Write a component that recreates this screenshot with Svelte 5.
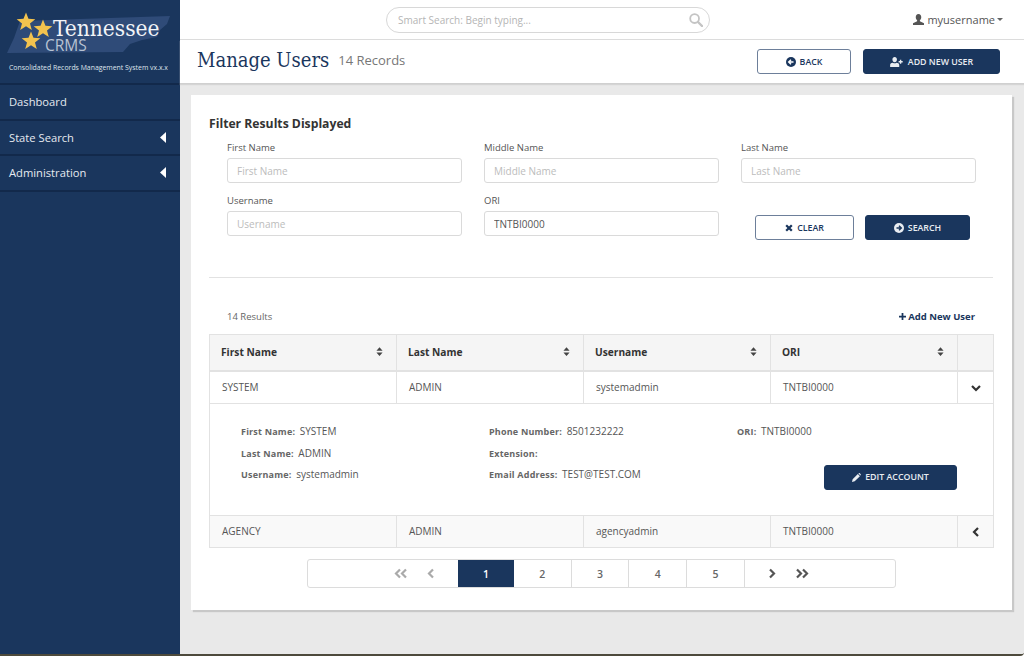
<script>
  const filters = [
    { label: 'First Name', placeholder: 'First Name', value: '' },
    { label: 'Middle Name', placeholder: 'Middle Name', value: '' },
    { label: 'Last Name', placeholder: 'Last Name', value: '' },
    { label: 'Username', placeholder: 'Username', value: '' },
    { label: 'ORI', placeholder: 'ORI', value: 'TNTBI0000' }
  ];

  const columns = ['First Name', 'Last Name', 'Username', 'ORI'];
  const pages = [1, 2, 3, 4, 5];
  const nav = [
    { label: 'Dashboard', arrow: false },
    { label: 'State Search', arrow: true },
    { label: 'Administration', arrow: true }
  ];
  const star = 'M0 -10 L2.6 -3.3 L9.8 -3 L4.2 1.5 L6.1 8.4 L0 4.5 L-6.1 8.4 L-4.2 1.5 L-9.8 -3 L-2.6 -3.3 Z';
</script>

{#snippet circleArrow(dir)}
  <svg class="ico" viewBox="0 0 12 12" width="10" height="10">
    <circle cx="6" cy="6" r="6" fill="currentColor" />
    {#if dir === 'left'}
      <path d="M9 6H3.6M6 3.2L3.2 6L6 8.8" class="cut" />
    {:else}
      <path d="M3 6H8.4M6 3.2L8.8 6L6 8.8" class="cut dark" />
    {/if}
  </svg>
{/snippet}

{#snippet sortIcon()}
  <svg class="sort" viewBox="0 0 8 10" width="7" height="9">
    <path d="M4 0L7.5 4H.5ZM4 10L.5 6H7.5Z" fill="#444" />
  </svg>
{/snippet}

{#snippet chevron(points, stroke, width = 10, height = 10)}
  <svg viewBox="0 0 {width} {height}" {width} {height}>
    <path d={points} fill="none" stroke={stroke} stroke-width="2.2" />
  </svg>
{/snippet}

<div class="shell">
  <aside class="sidebar">
    <div class="brand">
      <svg class="logo" viewBox="0 0 180 60" width="180" height="60">
        <path d="M20 21L50 20L170 16L167 24L160 30L157 37L142 40L130 44L123 52L7 53L14 38Z" fill="#2f4b78" />
        <path d="{star}" transform="translate(26 22) scale(.95)" fill="#f3c34e" />
        <path d="{star}" transform="translate(43 29) scale(.95)" fill="#f3c34e" />
        <path d="{star}" transform="translate(31 41) scale(.95)" fill="#f3c34e" />
        <text x="53" y="36" class="logo-name">Tennessee</text>
        <text x="45" y="51" class="logo-crms">CRMS</text>
      </svg>
      <div class="tagline">Consolidated Records Management System vx.x.x</div>
    </div>
    <nav>
      {#each nav as item}
        <div class="nav-item">
          <span>{item.label}</span>
          {#if item.arrow}
            <svg viewBox="0 0 6 11" width="6" height="11"><path d="M6 0V11L0 5.500Z" fill="#fff" /></svg>
          {/if}
        </div>
      {/each}
    </nav>
  </aside>

  <div class="main">
    <header class="topbar">
      <div class="smart-search">
        <span>Smart Search: Begin typing...</span>
        <svg viewBox="0 0 14 14" width="14" height="14">
          <circle cx="5.600" cy="5.600" r="4.400" fill="none" stroke="#c4c4c4" stroke-width="1.800" />
          <path d="M9 9L13 13" stroke="#c4c4c4" stroke-width="2.400" stroke-linecap="round" />
        </svg>
      </div>
      <div class="account">
        <svg viewBox="0 0 12 12" width="11" height="11">
          <path d="M6 0C8 0 9 1.500 9 3.500C9 5 8.300 6.200 7.500 6.800V7.800L12 10V12H0V10L4.500 7.800V6.800C3.700 6.200 3 5 3 3.500C3 1.500 4 0 6 0Z" fill="#555" />
        </svg>
        <span>myusername</span>
        <i class="caret"></i>
      </div>
    </header>

    <div class="titlebar">
      <div class="title">
        <h1>Manage Users</h1>
        <span class="count">14 Records</span>
      </div>
      <div class="actions">
        <button class="btn outline back">
          {@render circleArrow('left')}
          BACK
        </button>
        <button class="btn solid add">
          <svg class="ico" viewBox="0 0 14 11" width="13" height="10">
            <path d="M5 0C6.500 0 7.500 1.100 7.500 2.700C7.500 4.300 6.500 5.800 5 5.800C3.500 5.800 2.500 4.300 2.500 2.700C2.500 1.100 3.500 0 5 0ZM0 11V8.500C0 7 1.500 6.300 3 6.200C4.200 7 5.800 7 7 6.200C8.500 6.300 10 7 10 8.500V11Z" fill="currentColor" />
            <path d="M11.500 3V7.500M9.300 5.200H13.800" stroke="currentColor" stroke-width="1.500" />
          </svg>
          ADD NEW USER
        </button>
      </div>
    </div>

    <div class="content">
      <section class="card">
        <h2>Filter Results Displayed</h2>
        <form class="filters">
          {#each filters as f}
            <label>
              <span>{f.label}</span>
              <input type="text" placeholder={f.placeholder} value={f.value} />
            </label>
          {/each}
          <div class="filter-actions">
            <button type="button" class="btn outline clear">
              <svg class="ico" viewBox="0 0 10 10" width="8" height="8">
                <path d="M1.500 1.500L8.500 8.500M8.500 1.500L1.500 8.500" stroke="currentColor" stroke-width="2.800" />
              </svg>
              CLEAR
            </button>
            <button type="button" class="btn solid search">
              {@render circleArrow('right')}
              SEARCH
            </button>
          </div>
        </form>

        <hr />

        <div class="results-bar">
          <span>14 Results</span>
          <a href="#add">
            <svg viewBox="0 0 8 8" width="7" height="7"><path d="M4 0V8M0 4H8" stroke="currentColor" stroke-width="2" /></svg>
            Add New User
          </a>
        </div>

        <table>
          <thead>
            <tr>
              {#each columns as c}
                <th><div class="th-inner">{c}{@render sortIcon()}</div></th>
              {/each}
              <th class="toggle"></th>
            </tr>
          </thead>
          <tbody>
            <tr class="row">
              <td>SYSTEM</td>
              <td>ADMIN</td>
              <td>systemadmin</td>
              <td>TNTBI0000</td>
              <td class="toggle">{@render chevron('M1 3L5 7L9 3', '#333')}</td>
            </tr>
            <tr class="detail-row">
              <td colspan="5">
                <div class="details">
                  <div class="detail-col one">
                    <p><b>First Name:</b> SYSTEM</p>
                    <p><b>Last Name:</b> ADMIN</p>
                    <p><b>Username:</b> systemadmin</p>
                  </div>
                  <div class="detail-col two">
                    <p><b>Phone Number:</b> 8501232222</p>
                    <p><b>Extension:</b></p>
                    <p><b>Email Address:</b> TEST@TEST.COM</p>
                  </div>
                  <div class="detail-col three">
                    <p><b>ORI:</b> TNTBI0000</p>
                    <button class="btn solid edit">
                      <svg class="ico" viewBox="0 0 10 10" width="9" height="9">
                        <path d="M0 10L.7 7L6.500 1.200L8.800 3.500L3 9.300ZM7.300 .5C7.800 0 8.400 0 8.900 .5L9.500 1.100C10 1.600 10 2.200 9.500 2.700L9.400 2.900L7.100 .6Z" fill="currentColor" />
                      </svg>
                      EDIT ACCOUNT
                    </button>
                  </div>
                </div>
              </td>
            </tr>
            <tr class="row alt">
              <td>AGENCY</td>
              <td>ADMIN</td>
              <td>agencyadmin</td>
              <td>TNTBI0000</td>
              <td class="toggle">{@render chevron('M7 1L3 5L7 9', '#333')}</td>
            </tr>
          </tbody>
        </table>

        <div class="pager">
          <div class="pager-left">
            {@render chevron('M6 1.500L2 5.500L6 9.500M12 1.500L8 5.500L12 9.500', '#aaa', 14, 11)}
            {@render chevron('M6 1.500L2 5.500L6 9.500', '#aaa', 8, 11)}
          </div>
          {#each pages as p}
            <div class="page" class:active={p === 1}>{p}</div>
          {/each}
          <div class="pager-right">
            {@render chevron('M2 1.500L6 5.500L2 9.500', '#555', 8, 11)}
            {@render chevron('M2 1.500L6 5.500L2 9.500M8 1.500L12 5.500L8 9.500', '#555', 14, 11)}
          </div>
        </div>
      </section>
    </div>
  </div>
</div>

<style>
  :global(body) {
    margin: 0;
    font-family: "Open Sans", "Liberation Sans", sans-serif;
    color: #555;
  }

  .shell {
    display: flex;
    width: 1024px;
    height: 656px;
    overflow: hidden;
    border-bottom: 2px solid #4d4a3c;
    border-bottom-right-radius: 4px;
    box-sizing: border-box;
  }

  .sidebar {
    width: 180px;
    flex: none;
    background: #1a365d;
    color: #fff;
  }

  .brand {
    height: 85px;
    box-sizing: border-box;
    border-bottom: 2px solid #12294b;
  }

  .logo {
    display: block;
  }

  .logo-name {
    font-family: "DejaVu Serif Condensed", "DejaVu Serif", serif;
    font-size: 22.500px;
    fill: #f2f4f7;
  }

  .logo-crms {
    font-family: "Open Sans", sans-serif;
    font-size: 15.500px;
    fill: #b9c3d3;
  }

  .tagline {
    margin: 2px 0 0 9px;
    font-size: 6.900px;
    line-height: 12px;
    white-space: nowrap;
    color: #dfe4ec;
  }

  .nav-item {
    height: 35.500px;
    box-sizing: border-box;
    display: flex;
    align-items: center;
    justify-content: space-between;
    padding: 0 14px 0 9px;
    font-size: 11.200px;
    color: #e6eaf0;
    border-bottom: 2px solid #12294b;
  }

  .main {
    flex: 1;
    min-width: 0;
    display: flex;
    flex-direction: column;
    background: #e9e9e9;
  }

  .topbar {
    height: 40px;
    box-sizing: border-box;
    flex: none;
    background: #fff;
    border-bottom: 1px solid #dcdcdc;
    position: relative;
    display: flex;
    justify-content: flex-end;
    align-items: center;
    padding-right: 21px;
  }

  .smart-search {
    position: absolute;
    left: 206px;
    top: 7px;
    width: 324px;
    height: 26px;
    box-sizing: border-box;
    border: 1px solid #d8d8d8;
    border-radius: 13px;
    display: flex;
    align-items: center;
    justify-content: space-between;
    padding: 0 6px 0 11px;
    font-size: 10px;
    color: #b5b5b5;
  }

  .account {
    display: flex;
    align-items: center;
    gap: 3px;
    font-size: 11px;
    color: #555;
  }

  .caret {
    width: 0;
    height: 0;
    border-left: 3px solid transparent;
    border-right: 3px solid transparent;
    border-top: 3px solid #666;
    margin-left: -1px;
  }

  .titlebar {
    height: 44px;
    box-sizing: border-box;
    flex: none;
    background: #fff;
    border-bottom: 1px solid #d0d0d0;
    box-shadow: 0 1px 1px #d5d5d5;
    display: flex;
    align-items: center;
    justify-content: space-between;
    padding: 0 24px 0 17px;
  }

  .title {
    display: flex;
    align-items: center;
    gap: 9px;
    margin-top: -3px;
  }

  h1 {
    margin: 0;
    font-family: "DejaVu Serif Condensed", "DejaVu Serif", serif;
    font-weight: 400;
    font-size: 20px;
    color: #1a365d;
  }

  .count {
    font-size: 13px;
    color: #777;
  }

  .actions {
    display: flex;
    gap: 12px;
  }

  .btn {
    height: 25px;
    box-sizing: border-box;
    border-radius: 3px;
    font-family: inherit;
    font-size: 8.800px;
    font-weight: 600;
    display: inline-flex;
    align-items: center;
    justify-content: center;
    gap: 4px;
    padding: 0;
    cursor: pointer;
  }

  .solid {
    background: #1a365d;
    border: 1px solid #1a365d;
    color: #e9edf2;
  }

  .outline {
    background: #fff;
    border: 1px solid #6d7f9a;
    color: #1a365d;
  }

  .ico {
    flex: none;
  }

  .cut {
    fill: none;
    stroke: #fff;
    stroke-width: 1.700;
  }

  .cut.dark {
    stroke: #1a365d;
  }

  .back { width: 94px; }
  .add { width: 137px; gap: 5px; }
  .clear { width: 99px; }
  .search { width: 105px; }
  .edit { width: 133px; font-weight: 600; }

  .content {
    padding: 11px 11px 0 11px;
  }

  .card {
    background: #fff;
    width: 821px;
    height: 515px;
    box-sizing: border-box;
    box-shadow: 2px 2px 1px #c8c8c8;
    padding: 21px 18px 0 18px;
  }

  h2 {
    margin: 0;
    font-size: 12.200px;
    line-height: 16px;
    font-weight: 700;
    color: #333;
  }

  .filters {
    display: grid;
    grid-template-columns: 235px 235px 235px;
    column-gap: 22px;
    row-gap: 11px;
    margin: 9px 0 0 18px;
  }

  label {
    display: flex;
    flex-direction: column;
    gap: 3px;
    font-size: 9.500px;
    line-height: 14px;
    color: #555;
  }

  input {
    height: 25px;
    box-sizing: border-box;
    border: 1px solid #dadada;
    border-radius: 3px;
    padding: 0 9px;
    font-family: inherit;
    font-size: 10px;
    color: #555;
    outline: none;
  }

  input::placeholder {
    color: #bcbcbc;
  }

  .filter-actions {
    display: flex;
    gap: 11px;
    padding: 21px 0 0 14px;
  }

  hr {
    margin: 37px 0 0;
    border: 0;
    border-top: 1px solid #e2e2e2;
    width: 784px;
  }

  .results-bar {
    width: 748px;
    margin: 31px 0 0 18px;
    display: flex;
    justify-content: space-between;
    align-items: center;
    height: 14px;
    font-size: 9.500px;
    color: #666;
  }

  .results-bar a {
    color: #1a365d;
    font-weight: 700;
    text-decoration: none;
    display: inline-flex;
    align-items: center;
    gap: 2px;
  }

  table {
    margin-top: 11px;
    width: 785px;
    border-collapse: collapse;
    table-layout: fixed;
    font-size: 10px;
    color: #555;
  }

  th, td {
    border: 1px solid #e2e2e2;
    padding: 0 12px;
    text-align: left;
  }

  th {
    height: 33px;
    padding: 0 12px 2px 11px;
    background: #f5f5f5;
    font-size: 10.200px;
    font-weight: 700;
    color: #333;
    border-bottom-width: 2px;
  }

  .th-inner {
    display: flex;
    justify-content: space-between;
    align-items: flex-start;
    padding-right: 1px;
  }

  .sort {
    margin-top: 2px;
  }

  .row td {
    height: 29px;
    padding-bottom: 2px;
  }

  .alt td {
    background: #f9f9f9;
  }

  th.toggle, .row td.toggle {
    width: 36px;
    box-sizing: border-box;
    padding: 0;
    text-align: center;
  }

  .row td.toggle {
    height: 31px;
  }

  td.toggle svg {
    display: block;
    margin: 1px auto 0;
  }

  .detail-row td {
    padding: 0;
    height: 111px;
    vertical-align: top;
  }

  .details {
    display: grid;
    grid-template-columns: 248px 248px 1fr;
    padding: 20px 0 0 31px;
  }

  .detail-col p {
    margin: 0 0 6.500px;
    height: 15px;
    line-height: 15px;
    font-size: 10px;
  }

  b {
    font-size: 9px;
    font-weight: 700;
    color: #666;
    letter-spacing: .2px;
    margin-right: 2px;
  }

  .three .edit {
    display: flex;
    margin: 25.500px 0 0 87px;
  }

  .pager {
    margin: 11px 0 0 98px;
    width: 589px;
    height: 29px;
    box-sizing: border-box;
    border: 1px solid #dcdcdc;
    border-radius: 3px;
    display: flex;
    align-items: stretch;
    font-size: 10.500px;
    font-weight: 600;
    color: #666;
  }

  .pager-left {
    width: 150px;
    box-sizing: border-box;
    display: flex;
    align-items: center;
    justify-content: flex-end;
    gap: 19px;
    padding-right: 23px;
  }

  .pager-right {
    flex: 1;
    display: flex;
    align-items: center;
    gap: 19px;
    padding-left: 23px;
  }

  .page {
    width: 57.700px;
    box-sizing: border-box;
    display: flex;
    align-items: center;
    justify-content: center;
    border-right: 1px solid #dcdcdc;
  }

  .page.active {
    background: #1a365d;
    color: #fff;
    width: 56px;
    border-right: 0;
  }
</style>
